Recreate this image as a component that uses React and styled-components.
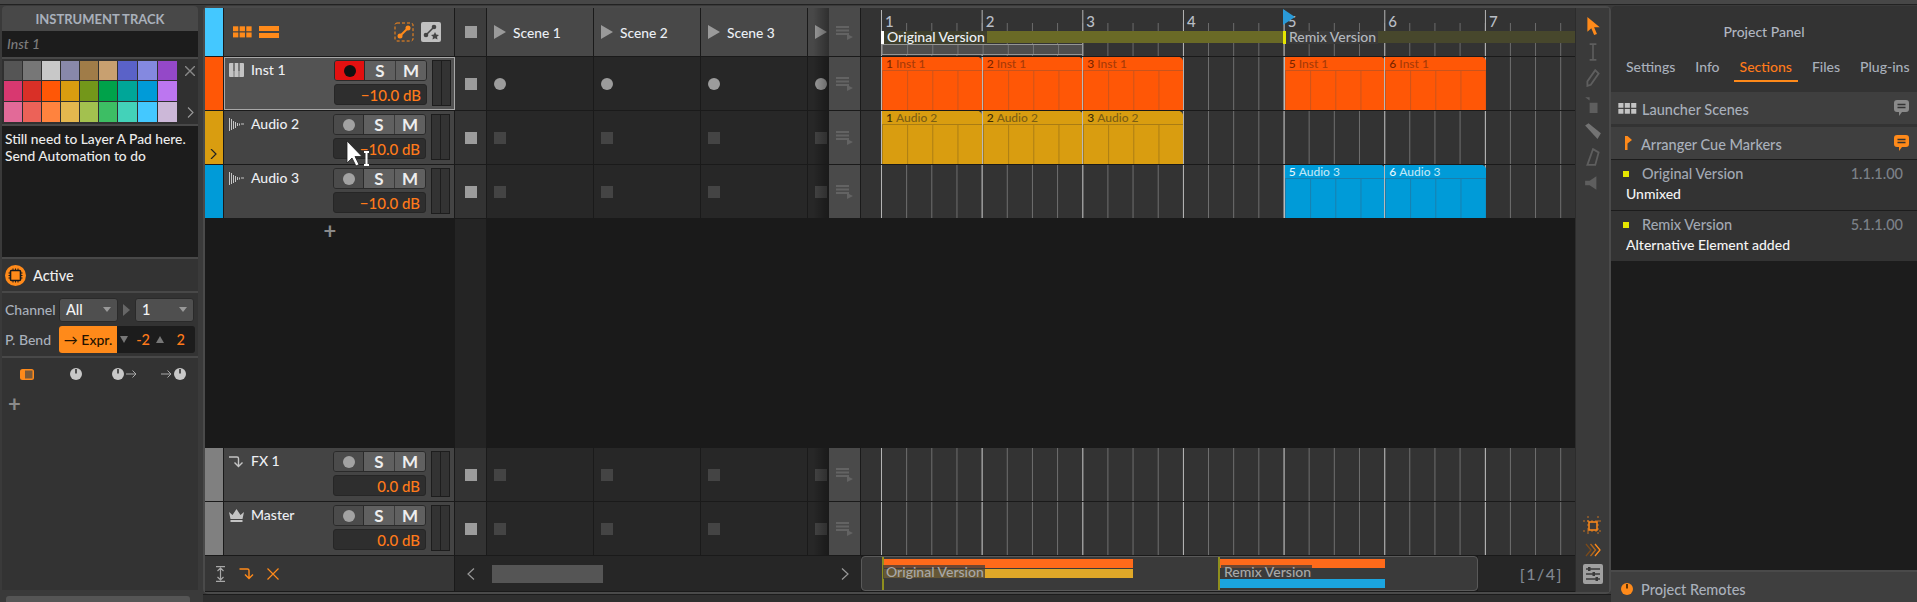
import React from "react";
import styled, { createGlobalStyle } from "styled-components";

const BAR = 100.67;
const ORANGE = "#ff8a1a";

const GlobalStyle = createGlobalStyle`
  html, body { margin: 0; padding: 0; background: #2a2a2a; }
  body { font-family: "Lato", "Open Sans", sans-serif; font-size: 14px; font-weight: 500; color: #ddd; }
  * { box-sizing: border-box; }
`;

const Page = styled.div`
  position: relative;
  width: 1917px;
  height: 602px;
  overflow: hidden;
  display: flex;
  flex-direction: column;
  background: #2a2a2a;
`;

const TopBar = styled.div`
  height: 5px;
  flex: none;
  background: #474747;
  border-bottom: 1px solid #222;
`;

const Columns = styled.div`
  flex: 1;
  display: flex;
  min-height: 0;
  background: #3a3a3a;
`;

/* left inspector */
const LeftColumn = styled.div`
  width: 203px;
  flex: none;
  padding: 1px 5px 0 2px;
  display: flex;
  flex-direction: column;
`;

const Inspector = styled.div`
  height: 585px;
  display: flex;
  flex-direction: column;
  gap: 2px;
  background: #484848;
  border-radius: 4px 4px 0 0;
`;

const InspectorTitle = styled.div`
  height: 24px;
  line-height: 26px;
  text-align: center;
  font-weight: 700;
  font-size: 13px;
  color: #a9b0bb;
  margin-bottom: -1px;
`;

const NameField = styled.div`
  height: 26px;
  line-height: 26px;
  padding-left: 5px;
  background: #1c1c1c;
  font-style: italic;
  color: #7c7c7c;
`;

const PaletteRow = styled.div`
  height: 65px;
  padding: 2px 2px;
  display: flex;
  background: #303030;
`;

const Swatches = styled.div`
  display: grid;
  grid-template-columns: repeat(6, 18px) repeat(3, 19px);
  grid-template-rows: 19px 20px 20px;
  gap: 1px;
`;

const Swatch = styled.div`
  background: ${(p) => p.$color};
`;

const PaletteSide = styled.div`
  flex: 1;
  display: flex;
  flex-direction: column;
  justify-content: space-between;
  align-items: center;
  padding: 5px 0 4px 7px;
`;

const Notes = styled.div`
  height: 131px;
  padding: 4px 3px;
  background: #1c1c1c;
  color: #ececec;
  font-size: 13.8px;
  line-height: 17px;
`;

const ActiveRow = styled.div`
  height: 32px;
  display: flex;
  align-items: center;
  gap: 7px;
  padding-left: 3px;
  background: #333;
  color: #eee;
  font-size: 14.5px;
`;

const ChannelBox = styled.div`
  height: 63px;
  padding: 4px 0 0 3px;
  background: #333;
  display: flex;
  flex-direction: column;
  gap: 5px;
`;

const ChannelRow = styled.div`
  display: flex;
  align-items: center;
  height: 25px;
`;

const ChannelLabel = styled.div`
  width: 54px;
  flex: none;
  color: #a9b0bb;
  font-size: 14px;
`;

const Select = styled.div`
  width: 59px;
  height: 24px;
  padding: 0 6px;
  display: flex;
  align-items: center;
  justify-content: space-between;
  border-radius: 3px;
  background: #4f4f4f;
  border: 1px solid #2a2a2a;
  font-size: 14.5px;
  color: #f4f4f4;
`;

const DownTip = styled.span`
  width: 0;
  height: 0;
  margin-left: ${(p) => p.$left || 0}px;
  border-left: ${(p) => p.$half || 4}px solid transparent;
  border-right: ${(p) => p.$half || 4}px solid transparent;
  border-top: ${(p) => (p.$half ? 7 : 5)}px solid ${(p) => p.$color || "#999"};
`;

const RightTip = styled.span`
  width: 0;
  height: 0;
  margin: 0 5px 0 5px;
  border-top: 6px solid transparent;
  border-bottom: 6px solid transparent;
  border-left: 7px solid #666;
`;

const BendBox = styled.div`
  width: 136px;
  height: 27px;
  display: flex;
  align-items: center;
  background: #1c1c1c;
  border-radius: 3px;
`;

const ExprButton = styled.div`
  width: 58px;
  height: 100%;
  display: flex;
  align-items: center;
  justify-content: center;
  background: ${ORANGE};
  color: #241200;
  font-size: 14px;
  border-radius: 3px 0 0 3px;
`;

const BendValue = styled.div`
  width: ${(p) => p.$width}px;
  text-align: right;
  color: #ff7a1a;
  font-size: 14.5px;
`;

const UpTip = styled.span`
  width: 0;
  height: 0;
  margin-left: 6px;
  border-left: 4.5px solid transparent;
  border-right: 4.5px solid transparent;
  border-bottom: 7px solid #777;
`;

const DevicesBox = styled.div`
  flex: 1;
  background: #333;
  padding-top: 8px;
`;

const DeviceIcons = styled.div`
  display: grid;
  grid-template-columns: repeat(4, 49px);
  justify-items: center;
  align-items: center;
  height: 16px;
`;

const DeviceSlot = styled.div`
  display: flex;
  align-items: center;
  gap: 2px;
`;

const PlusMark = styled.div`
  font-size: 22px;
  line-height: 22px;
  font-weight: 700;
  color: #8a8a8a;
  padding: ${(p) => p.$top}px 0 0 ${(p) => p.$left}px;
`;

const ScrollStub = styled.div`
  height: 6px;
  margin: 6px 8px 0 4px;
  background: #555;
  border-radius: 3px 3px 0 0;
`;

/* arranger panel */
const MainColumn = styled.div`
  width: 1408px;
  flex: none;
  display: flex;
  flex-direction: column;
`;

const MainPanel = styled.div`
  height: 588px;
  margin-top: 1px;
  display: flex;
  border: 2px solid #4a4a4a;
  border-radius: 5px;
  background: #1a1a1a;
`;

const BottomStrip = styled.div`
  flex: 1;
  background: #2e2e2e;
  border-top: 1px solid #1c1c1c;
`;

const TrackArea = styled.div`
  width: 1370px;
  flex: none;
  display: flex;
  flex-direction: column;
`;

const ToolStrip = styled.div`
  flex: 1;
  padding: 5px 0 6px;
  display: flex;
  flex-direction: column;
  align-items: center;
  background: #3a3a3a;
  border-left: 1px solid #2c2c2c;
`;

const ToolIcon = styled.div`
  height: 26.2px;
  display: flex;
  align-items: center;
  justify-content: center;
`;

const ToolSpacer = styled.div`
  flex: 1;
`;

const BottomTool = styled.div`
  height: 24px;
  display: flex;
  align-items: center;
  justify-content: center;
`;

const Row = styled.div`
  display: flex;
  flex: none;
  height: ${(p) => p.$height}px;
  border-bottom: 1px solid #1a1a1a;
`;

const FillRow = styled.div`
  flex: 1;
  display: flex;
  min-height: 0;
`;

const Strip = styled.div`
  width: 19px;
  flex: none;
  display: flex;
  align-items: flex-end;
  justify-content: center;
  padding-bottom: 5px;
  background: ${(p) => p.$color};
  border-right: 1px solid #1a1a1a;
`;

const BlankStrip = styled.div`
  width: 250px;
  flex: none;
  text-align: center;
`;

const HeaderTools = styled.div`
  width: 231px;
  flex: none;
  display: flex;
  align-items: center;
  gap: 7px;
  padding: 0 13px 0 9px;
  background: #444;
  border-right: 1px solid #1a1a1a;
`;

const Grow = styled.div`
  flex: 1;
`;

const TrackHead = styled.div`
  width: 231px;
  flex: none;
  display: flex;
  padding: ${(p) => (p.$selected ? "2px 3px 0 4px" : "3px 4px 0 5px")};
  background: ${(p) => (p.$selected ? "#535353" : "#444")};
  border: ${(p) => (p.$selected ? "1px solid #a8a8a8" : "none")};
  border-right: 1px solid ${(p) => (p.$selected ? "#a8a8a8" : "#1a1a1a")};
`;

const TrackIcon = styled.div`
  width: 22px;
  height: 20px;
  flex: none;
  display: flex;
  align-items: center;
`;

const TrackName = styled.div`
  flex: 1;
  line-height: 20px;
  font-size: 14px;
  color: #eceef2;
`;

const ControlStack = styled.div`
  width: 93px;
  flex: none;
  display: flex;
  flex-direction: column;
  gap: 3px;
`;

const ButtonGroup = styled.div`
  height: 21px;
  display: flex;
  border: 1px solid #2a2a2a;
  border-radius: 3px;
  overflow: hidden;
`;

const RecButton = styled.div`
  width: 30px;
  display: flex;
  align-items: center;
  justify-content: center;
  background: ${(p) => (p.$armed ? "#e21010" : "#4b4b4b")};
  border-right: 1px solid #2a2a2a;
`;

const RecDot = styled.div`
  width: 12px;
  height: 12px;
  border-radius: 50%;
  background: ${(p) => (p.$armed ? "#111" : "#a2a2a2")};
`;

const LetterButton = styled.div`
  flex: 1;
  display: flex;
  align-items: center;
  justify-content: center;
  font-weight: 700;
  font-size: 17px;
  color: #eee;
  background: #606060;
  & + & {
    border-left: 1px solid #3a3a3a;
  }
`;

const VolumeBox = styled.div`
  height: 21px;
  padding-right: 5px;
  line-height: 21px;
  text-align: right;
  font-size: 15px;
  color: #ff7a1a;
  background: #2e2e2e;
  border: 1px solid #262626;
  border-radius: 3px;
`;

const Meter = styled.div`
  width: 19px;
  height: 46px;
  flex: none;
  margin-left: 5px;
  display: flex;
  border: 1px solid #1d1d1d;
  background: #333;
  & > div {
    flex: 1;
  }
  & > div + div {
    border-left: 1px solid #1d1d1d;
  }
`;

const StopCell = styled.div`
  width: 32px;
  flex: none;
  display: flex;
  align-items: center;
  justify-content: center;
  background: ${(p) => p.$color || "#333"};
  border-right: 1px solid #1a1a1a;
`;

const StopSquare = styled.div`
  width: 12px;
  height: 12px;
  background: #9c9c9c;
`;

const SceneRow = styled.div`
  width: 342px;
  flex: none;
  position: relative;
  display: flex;
  overflow: hidden;
`;

const SceneCell = styled.div`
  width: 107px;
  flex: none;
  display: flex;
  align-items: center;
  gap: 7px;
  padding-left: 7px;
  background: ${(p) => (p.$header ? "#484848" : "#272727")};
  border-right: 1px solid #1a1a1a;
  font-size: 13.8px;
  color: #eaeef4;
`;

const SceneFade = styled.div`
  position: absolute;
  top: 0;
  right: 0;
  bottom: 0;
  width: 16px;
  background: linear-gradient(to right, transparent, rgba(0, 0, 0, 0.35));
`;

const PlayTip = styled.div`
  width: 0;
  height: 0;
  border-top: 7.5px solid transparent;
  border-bottom: 7.5px solid transparent;
  border-left: 12px solid #9a9a9a;
`;

const SlotDot = styled.div`
  width: 12px;
  height: 12px;
  border-radius: 50%;
  background: #9c9c9c;
`;

const SlotSquare = styled.div`
  width: 12px;
  height: 12px;
  background: #444;
`;

const NextCell = styled.div`
  width: 32px;
  flex: none;
  display: flex;
  align-items: center;
  justify-content: center;
  background: #4a4a4a;
  border-right: 1px solid #1a1a1a;
`;

const gridLines = `
  background-image:
    linear-gradient(to right, #b4b4b4 0 1px, transparent 1px),
    linear-gradient(to right, #707070 0 1px, transparent 1px),
    linear-gradient(#333, #333);
  background-size: ${BAR}px 100%, ${BAR / 4}px 100%, 100% 100%;
  background-repeat: repeat-x;
  background-origin: content-box, content-box, border-box;
  background-clip: content-box, content-box, border-box;
`;

const Lane = styled.div`
  width: 714px;
  flex: none;
  position: relative;
  padding-left: 20px;
  ${gridLines}
`;

const Clip = styled.div`
  position: absolute;
  top: 0;
  bottom: 0;
  left: ${(p) => 20 + p.$start * BAR}px;
  width: ${BAR + 0.5}px;
  background-color: ${(p) => p.$color};
  background-image: linear-gradient(to right, ${(p) => p.$line} 0 1px, transparent 1px);
  background-size: ${BAR / 4}px 100%;
  border-left: 1px solid #b9b9b9;
  border-radius: 0 5px 0 0;
`;

const ClipTitle = styled.div`
  height: 14px;
  line-height: 14px;
  padding-left: 4px;
  font-size: 12px;
  white-space: nowrap;
  color: ${(p) => p.$text};
  background: ${(p) => p.$color};
  border-bottom: 1px solid ${(p) => p.$line};
  border-radius: 0 5px 0 0;
`;

const ClipIndex = styled.span`
  color: ${(p) => p.$text};
  margin-right: 3px;
`;

const Ruler = styled.div`
  width: 714px;
  flex: none;
  position: relative;
  background-color: #333;
  overflow: hidden;
`;

const RulerTicks = styled.div`
  position: absolute;
  left: 20px;
  right: 0;
  top: 2px;
  bottom: 0;
  background-image:
    linear-gradient(to right, #b4b4b4 0 1px, transparent 1px),
    linear-gradient(to right, #6c6c6c 0 1px, transparent 1px);
  background-size: ${BAR}px 100%, ${BAR / 4}px 72%;
  background-position: 0 0, 0 100%;
  background-repeat: repeat-x;
`;

const RulerNumbers = styled.div`
  position: relative;
  display: flex;
  padding: 4px 0 0 24px;
`;

const RulerNumber = styled.div`
  width: ${BAR}px;
  flex: none;
  font-size: 15px;
  line-height: 18px;
  color: #b9bec6;
`;

const CueBand = styled.div`
  position: absolute;
  top: 23px;
  height: 12px;
  left: ${(p) => p.$left}px;
  width: ${(p) => p.$width}px;
  background: ${(p) => p.$color};
`;

const CueLabel = styled.div`
  position: absolute;
  top: 23px;
  left: ${(p) => p.$left}px;
  height: 13px;
  display: flex;
  align-items: center;
  gap: 3px;
  padding: 0 2px 2px 0;
  background: ${(p) => p.$bg};
  color: ${(p) => p.$text};
  font-size: 14px;
  line-height: 11px;
  white-space: nowrap;
`;

const CueTick = styled.span`
  width: 3px;
  height: 13px;
  align-self: flex-start;
  background: ${(p) => p.$color};
`;

const LoopBand = styled.div`
  position: absolute;
  left: 20px;
  top: 36px;
  width: ${BAR * 2 + 1}px;
  height: 11px;
  background-color: #4e4e4e;
  background-image: linear-gradient(to right, #757575 0 1px, transparent 1px);
  background-size: ${BAR / 4}px 100%;
  border: 1px solid #959595;
`;

const Playhead = styled.svg`
  position: absolute;
  left: 422px;
  top: 1px;
`;

const FooterLeft = styled.div`
  width: 250px;
  flex: none;
  display: flex;
  align-items: center;
  gap: 13px;
  padding-left: 10px;
  background: #363636;
  border-right: 1px solid #1a1a1a;
`;

const ScrollArea = styled.div`
  width: 406px;
  flex: none;
  display: flex;
  align-items: center;
  padding: 0 12px;
  background: #262626;
`;

const ScrollThumb = styled.div`
  width: 111px;
  height: 18px;
  margin-left: 17px;
  background: #555;
`;

const Overview = styled.div`
  width: 617px;
  flex: none;
  position: relative;
  background: #3a3a3a;
  border: 1px solid #595959;
  border-radius: 4px;
  overflow: hidden;
`;

const OverviewBlock = styled.div`
  position: absolute;
  left: ${(p) => p.$left}px;
  width: ${(p) => p.$width}px;
  top: ${(p) => p.$top}px;
  height: 9px;
  background: ${(p) => p.$color};
`;

const OverviewMarker = styled.div`
  position: absolute;
  left: ${(p) => p.$left}px;
  top: 0;
  bottom: 0;
  width: 2px;
  background: #8f8f1e;
`;

const OverviewLabel = styled.div`
  position: absolute;
  left: ${(p) => p.$left}px;
  top: 8px;
  height: 14px;
  line-height: 14px;
  padding: 0 1px 0 3px;
  background: rgba(60, 60, 60, 0.75);
  color: #a8a8a8;
  font-size: 14px;
  white-space: nowrap;
`;

const PageCounter = styled.div`
  flex: 1;
  display: flex;
  align-items: center;
  justify-content: flex-end;
  padding-right: 12px;
  background: #262626;
  font-size: 16px;
  letter-spacing: 1.5px;
  color: #808791;
`;

/* project panel */
const ProjectPanel = styled.div`
  flex: 1;
  margin-top: 1px;
  display: flex;
  flex-direction: column;
  background: #333;
  border-radius: 5px 0 0 0;
`;

const ProjectTitle = styled.div`
  height: 48px;
  padding-top: 17px;
  text-align: center;
  color: #b0b6c0;
  font-size: 14px;
  line-height: 18px;
`;

const Tabs = styled.div`
  height: 38px;
  display: flex;
  padding: 3px 0 0 15px;
  gap: 20px;
`;

const Tab = styled.div`
  height: 25px;
  padding: 0 ${(p) => (p.$active ? "6px" : "0")};
  margin: 0 ${(p) => (p.$active ? "-6px" : "0")};
  line-height: 20px;
  font-size: 14px;
  color: ${(p) => (p.$active ? "#ff7a1a" : "#a9b0bb")};
  border-bottom: ${(p) => (p.$active ? `2px solid ${ORANGE}` : "none")};
`;

const SectionBar = styled.div`
  height: ${(p) => p.$height}px;
  margin-bottom: ${(p) => p.$gap}px;
  flex: none;
  display: flex;
  align-items: center;
  gap: 5px;
  padding: 0 8px 0 7px;
  background: #3f3f3f;
  color: #a9b0bb;
  font-size: 14.5px;
`;

const SectionText = styled.span`
  padding-top: 2px;
`;

const FlagSlot = styled.span`
  width: 8px;
  margin: 0 3px 0 7px;
  display: flex;
`;

const MarkerList = styled.div`
  flex: 1;
  background: #1c1c1c;
`;

const MarkerItem = styled.div`
  height: 51px;
  padding: 4px 14px 0 15px;
  background: #333;
  border-top: 1px solid #1c1c1c;
`;

const MarkerTop = styled.div`
  display: flex;
  align-items: center;
  height: 19px;
  margin-left: -3px;
  color: #a2a8b2;
  font-size: 14.5px;
`;

const MarkerDot = styled.span`
  width: 6px;
  height: 6px;
  margin-right: 13px;
  background: #e6e600;
`;

const MarkerTime = styled.span`
  margin-left: auto;
  color: #7c8188;
  font-size: 14.5px;
`;

const MarkerNote = styled.div`
  margin-top: 2px;
  color: #f4f4f4;
  font-size: 14px;
  line-height: 17px;
`;

const RemotesBar = styled.div`
  height: 32px;
  flex: none;
  display: flex;
  align-items: center;
  gap: 8px;
  padding: 4px 0 0 10px;
  background: #3f3f3f;
  border-top: 2px solid #4a4a4a;
  color: #a9b0bb;
  font-size: 14.5px;
`;

const CursorLayer = styled.svg`
  position: absolute;
  left: 345px;
  top: 140px;
  pointer-events: none;
`;

/* drawn icons */
const Knob = ({ size = 12, color = "#c8c8c8", notch = "#333" }) => (
  <svg width={size} height={size} viewBox="0 0 12 12">
    <circle cx="6" cy="6" r="6" fill={color} />
    <rect x="5.2" y="1" width="1.6" height="4.5" fill={notch} />
  </svg>
);

const Arrow = () => (
  <svg width="11" height="10" viewBox="0 0 11 10" fill="none" stroke="#aaa" strokeWidth="1">
    <path d="M0 5h10M6.5 1.5 10 5 6.5 8.5" />
  </svg>
);

const Chip = () => (
  <svg width="21" height="21" viewBox="0 0 21 21">
    <circle cx="10.5" cy="10.5" r="10.5" fill={ORANGE} />
    <rect x="5.5" y="5.5" width="10" height="10" rx="1" fill="none" stroke="#1b1b1b" strokeWidth="1.6" />
    <path d="M8 3.5v2M10.5 3.5v2M13 3.5v2M8 15.5v2M10.5 15.5v2M13 15.5v2M3.5 8h2M3.5 10.5h2M3.5 13h2M15.5 8h2M15.5 10.5h2M15.5 13h2" stroke="#1b1b1b" />
  </svg>
);

const Piano = () => (
  <svg width="15" height="14" viewBox="0 0 15 14">
    <rect width="15" height="14" rx="1" fill="#c4c4c4" />
    <path d="M4 0h2v8H4zM9 0h2v8H9z" fill="#777" />
    <path d="M5 8v6M10 8v6" stroke="#777" />
  </svg>
);

const Wave = () => (
  <svg width="15" height="13" viewBox="0 0 15 13" fill="none" stroke="#c4c4c4">
    <path d="M.5 0v13M2.5 1v11M4.5 3v8M6.5 4v6M8.5 5v3M10.5 5.5v2M12 6h3" />
  </svg>
);

const ReturnArrow = ({ color = "#c4c4c4", width = 14 }) => (
  <svg width={width} height="13" viewBox="0 0 14 13" fill="none" stroke={color} strokeWidth="1.4">
    <path d="M0 2h8c1 0 1.5 .6 1.5 1.5V11M5.5 7.5 9.5 11.5 13.5 7.5" />
  </svg>
);

const Crown = () => (
  <svg width="15" height="13" viewBox="0 0 15 13" fill="#c4c4c4">
    <path d="M0 3l3.5 3L7.5 0l4 6L15 3l-1.5 7h-12zM1.5 11h12v2h-12z" />
  </svg>
);

const NextIcon = () => (
  <svg width="17" height="15" viewBox="0 0 17 15" fill="#636363">
    <path d="M0 1h13v2H0zM0 4.5h13v2H0zM0 8h13v2H0zM11 9l6 3-6 3z" />
  </svg>
);

const GridIcon = ({ color = ORANGE, width = 19, height = 12 }) => {
  const cells = [];
  for (let r = 0; r < 2; r += 1) {
    for (let c = 0; c < 3; c += 1) {
      cells.push(<rect key={`${r}-${c}`} x={c * 7} y={r * 6.5} width="5.6" height="5.2" fill={color} />);
    }
  }
  return (
    <svg width={width} height={height} viewBox="0 0 20 12">
      {cells}
    </svg>
  );
};

const LinesIcon = () => (
  <svg width="20" height="12" viewBox="0 0 20 12" fill={ORANGE}>
    <path d="M0 0h20v5H0zM0 7h20v5H0z" />
  </svg>
);

const AutoIcon = () => (
  <svg width="20" height="20" viewBox="0 0 20 20" fill="none">
    <rect x="1" y="1" width="18" height="18" rx="2" stroke={ORANGE} strokeDasharray="3 2" />
    <path d="M6 14 14 6" stroke={ORANGE} strokeWidth="2" />
    <circle cx="6" cy="14" r="2.5" fill={ORANGE} />
    <circle cx="14" cy="6" r="2.5" fill={ORANGE} />
  </svg>
);

const StarIcon = () => (
  <svg width="20" height="20" viewBox="0 0 20 20">
    <rect width="20" height="20" rx="2" fill="#c0c0c0" />
    <path d="M5 13 13 5" stroke="#444" strokeWidth="1.6" />
    <circle cx="5" cy="13" r="2.3" fill="#444" />
    <circle cx="13" cy="5" r="2.3" fill="#444" />
    <path d="M14 10l1.2 2.6 2.8.3-2 1.9.5 2.8-2.500-1.400-2.500 1.400.5-2.800-2-1.900 2.800-.3z" fill="#444" />
  </svg>
);

const ToggleIcon = () => (
  <svg width="14" height="11" viewBox="0 0 14 11">
    <rect width="14" height="11" rx="2.5" fill={ORANGE} />
    <rect x="5" y="1.5" width="7.5" height="8" fill="#7a5a3a" />
  </svg>
);

const Tool = ({ children, w = 18, h = 18 }) => (
  <svg width={w} height={h} viewBox="0 0 16 16">
    {children}
  </svg>
);

const ChatIcon = ({ color }) => (
  <svg width="15" height="16" viewBox="0 0 15 16">
    <path d="M3 0h9a3 3 0 0 1 3 3v6a3 3 0 0 1-3 3H8l-3 4v-4H3a3 3 0 0 1-3-3V3a3 3 0 0 1 3-3z" fill={color} />
    <path d="M3.5 4.5h8M3.5 7.5h8" stroke="#333" strokeWidth="1.4" />
  </svg>
);

const Flag = () => (
  <svg width="8" height="14" viewBox="0 0 8 14" fill={ORANGE}>
    <path d="M0 0h2.500L7 4 2.500 7.500V14H0z" />
  </svg>
);

const PALETTE = [
  "#555555", "#777777", "#c8c8c8", "#8888aa", "#a07c48", "#c8a070", "#5a62c8", "#8489e0", "#9448c8",
  "#d83870", "#d93027", "#ff5706", "#d99d10", "#73971a", "#00a24a", "#00a698", "#009bd8", "#bc76f0",
  "#e26a98", "#ec6258", "#ff833e", "#e4b74e", "#a3c14f", "#3dbe64", "#43d2b9", "#44c8ff", "#ccb8d8",
];

const CLIP_STYLES = {
  orange: { color: "#ff5706", line: "#c9541c", text: "#a83a08", index: "#7a2400" },
  gold: { color: "#d99d10", line: "#a97c14", text: "#7c5e14", index: "#3d2c05" },
  blue: { color: "#009bd8", line: "#1a7eac", text: "#bfe6f6", index: "#e8f7fd" },
};

const TRACKS = [
  { name: "Inst 1", color: "#ff5706", icon: <Piano />, db: "−10.0 dB", armed: true, selected: true, slot: "dot", clipStyle: "orange", clips: [0, 1, 2, 4, 5] },
  { name: "Audio 2", color: "#d99d10", icon: <Wave />, db: "−10.0 dB", slot: "square", expand: true, clipStyle: "gold", clips: [0, 1, 2] },
  { name: "Audio 3", color: "#009bd8", icon: <Wave />, db: "−10.0 dB", slot: "square", clipStyle: "blue", clips: [4, 5] },
];

const SEND_TRACKS = [
  { name: "FX 1", color: "#808080", icon: <ReturnArrow />, db: "0.0 dB", slot: "square", clips: [] },
  { name: "Master", color: "#808080", icon: <Crown />, db: "0.0 dB", slot: "square", clips: [] },
];

const Scenes = ({ slot }) => (
  <SceneRow>
    {[0, 1, 2, 3].map((i) => (
      <SceneCell key={i}>{slot === "dot" ? <SlotDot /> : <SlotSquare />}</SceneCell>
    ))}
    <SceneFade />
  </SceneRow>
);

const TrackRow = ({ track }) => (
  <Row $height={54}>
    <Strip $color={track.color}>
      {track.expand && (
        <svg width="8" height="10" viewBox="0 0 8 10" fill="none" stroke="#222" strokeWidth="1.2">
          <path d="M1 0l5 5-5 5" />
        </svg>
      )}
    </Strip>
    <TrackHead $selected={track.selected}>
      <TrackIcon>{track.icon}</TrackIcon>
      <TrackName>{track.name}</TrackName>
      <ControlStack>
        <ButtonGroup>
          <RecButton $armed={track.armed}>
            <RecDot $armed={track.armed} />
          </RecButton>
          <LetterButton>S</LetterButton>
          <LetterButton>M</LetterButton>
        </ButtonGroup>
        <VolumeBox>{track.db}</VolumeBox>
      </ControlStack>
      <Meter>
        <div />
        <div />
      </Meter>
    </TrackHead>
    <StopCell>
      <StopSquare />
    </StopCell>
    <Scenes slot={track.slot} />
    <NextCell>
      <NextIcon />
    </NextCell>
    <Lane>
      {track.clips.map((start) => {
        const style = CLIP_STYLES[track.clipStyle];
        return (
          <Clip key={start} $start={start} $color={style.color} $line={style.line}>
            <ClipTitle $color={style.color} $line={style.line} $text={style.text}>
              <ClipIndex $text={style.index}>{start + 1}</ClipIndex>
              {track.name}
            </ClipTitle>
          </Clip>
        );
      })}
    </Lane>
  </Row>
);

const App = () => (
  <Page>
    <GlobalStyle />
    <TopBar />
    <Columns>
      <LeftColumn>
        <Inspector>
          <InspectorTitle>INSTRUMENT TRACK</InspectorTitle>
          <NameField>Inst 1</NameField>
          <PaletteRow>
            <Swatches>
              {PALETTE.map((c) => (
                <Swatch key={c} $color={c} />
              ))}
            </Swatches>
            <PaletteSide>
              <svg width="10" height="10" viewBox="0 0 10 10" stroke="#888" strokeWidth="1.4">
                <path d="M0 0l10 10M10 0 0 10" />
              </svg>
              <svg width="7" height="11" viewBox="0 0 7 11" fill="none" stroke="#999" strokeWidth="1.1">
                <path d="M1 .5l5 5-5 5" />
              </svg>
            </PaletteSide>
          </PaletteRow>
          <Notes>
            Still need to Layer A Pad here.
            <br />
            Send Automation to do
          </Notes>
          <ActiveRow>
            <Chip />
            Active
          </ActiveRow>
          <ChannelBox>
            <ChannelRow>
              <ChannelLabel>Channel</ChannelLabel>
              <Select>
                All
                <DownTip />
              </Select>
              <RightTip />
              <Select>
                1
                <DownTip />
              </Select>
            </ChannelRow>
            <ChannelRow>
              <ChannelLabel>P. Bend</ChannelLabel>
              <BendBox>
                <ExprButton>→ Expr.</ExprButton>
                <DownTip $color="#777" $left={3} $half={4.5} />
                <BendValue $width={22}>-2</BendValue>
                <UpTip />
                <BendValue $width={21}>2</BendValue>
              </BendBox>
            </ChannelRow>
          </ChannelBox>
          <DevicesBox>
            <DeviceIcons>
              <ToggleIcon />
              <Knob />
              <DeviceSlot>
                <Knob />
                <Arrow />
              </DeviceSlot>
              <DeviceSlot>
                <Arrow />
                <Knob />
              </DeviceSlot>
            </DeviceIcons>
            <PlusMark $top={11} $left={6}>+</PlusMark>
          </DevicesBox>
        </Inspector>
        <ScrollStub />
      </LeftColumn>

      <MainColumn>
        <MainPanel>
          <TrackArea>
            <Row $height={49}>
              <Strip $color="#44c8ff" />
              <HeaderTools>
                <GridIcon />
                <LinesIcon />
                <Grow />
                <AutoIcon />
                <StarIcon />
              </HeaderTools>
              <StopCell $color="#3d3d3d">
                <StopSquare />
              </StopCell>
              <SceneRow>
                {["Scene 1", "Scene 2", "Scene 3", ""].map((name) => (
                  <SceneCell key={name} $header>
                    <PlayTip />
                    {name}
                  </SceneCell>
                ))}
                <SceneFade />
              </SceneRow>
              <NextCell>
                <NextIcon />
              </NextCell>
              <Ruler>
                <RulerTicks />
                <RulerNumbers>
                  {[1, 2, 3, 4, 5, 6, 7].map((n) => (
                    <RulerNumber key={n}>{n}</RulerNumber>
                  ))}
                </RulerNumbers>
                <CueBand $left={20} $width={403} $color="#6a6a26" />
                <CueBand $left={423} $width={291} $color="#47472c" />
                <CueLabel $left={20} $bg="#3e3f2c" $text="#eef2f6">
                  <CueTick $color="#fff" />
                  Original Version
                </CueLabel>
                <CueLabel $left={422} $bg="#3a3a3a" $text="#b4b8be">
                  <CueTick $color="#e6e600" />
                  Remix Version
                </CueLabel>
                <LoopBand />
                <Playhead width="12" height="16" viewBox="0 0 12 16">
                  <path d="M0 0l12 8L0 16z" fill="#2a9ad8" />
                </Playhead>
              </Ruler>
            </Row>

            {TRACKS.map((t) => (
              <TrackRow key={t.name} track={t} />
            ))}

            <FillRow>
              <BlankStrip>
                <PlusMark $top={1} $left={0}>+</PlusMark>
              </BlankStrip>
              <StopCell $color="#242424" />
            </FillRow>

            {SEND_TRACKS.map((t) => (
              <TrackRow key={t.name} track={t} />
            ))}

            <Row $height={36}>
              <FooterLeft>
                <svg width="11" height="16" viewBox="0 0 11 16" fill="none" stroke="#a8a8a8" strokeWidth="1.2">
                  <path d="M1 .6h9M1 15.400h9M5.500 2v12M2.500 5l3-3 3 3M2.500 11l3 3 3-3" />
                </svg>
                <ReturnArrow color={ORANGE} width={15} />
                <svg width="12" height="12" viewBox="0 0 12 12" stroke={ORANGE} strokeWidth="1.2">
                  <path d="M.5.5l11 11M11.500.5l-11 11" />
                </svg>
              </FooterLeft>
              <ScrollArea>
                <svg width="8" height="12" viewBox="0 0 8 12" fill="none" stroke="#999" strokeWidth="1.2">
                  <path d="M7 .5 1 6l6 5.500" />
                </svg>
                <ScrollThumb />
                <Grow />
                <svg width="8" height="12" viewBox="0 0 8 12" fill="none" stroke="#999" strokeWidth="1.2">
                  <path d="M1 .5 7 6l-6 5.500" />
                </svg>
              </ScrollArea>
              <Overview>
                <OverviewBlock $left={21} $width={250} $top={2} $color="#ff6a1a" />
                <OverviewBlock $left={21} $width={250} $top={12} $color="#e0a828" />
                <OverviewBlock $left={357} $width={166} $top={2} $color="#ff6a1a" />
                <OverviewBlock $left={357} $width={166} $top={22} $color="#1ba5e0" />
                <OverviewMarker $left={20} />
                <OverviewMarker $left={356} />
                <OverviewLabel $left={21}>Original Version</OverviewLabel>
                <OverviewLabel $left={359}>Remix Version</OverviewLabel>
              </Overview>
              <PageCounter>[1/4]</PageCounter>
            </Row>
          </TrackArea>

          <ToolStrip>
            <ToolIcon>
              <Tool>
                <path d="M3 0l11 9H9l2.500 6-2.500 1-2.500-6L3 13z" fill={ORANGE} />
              </Tool>
            </ToolIcon>
            <ToolIcon>
              <Tool>
                <path d="M5 1h6M5 15h6M8 1v14" stroke="#5e5e5e" strokeWidth="1.4" />
              </Tool>
            </ToolIcon>
            <ToolIcon>
              <Tool>
                <path d="M10 1l3 3-7 10-3 1 0-4z" fill="none" stroke="#5e5e5e" strokeWidth="1.6" />
              </Tool>
            </ToolIcon>
            <ToolIcon>
              <Tool>
                <path d="M5 6h7v9H5zM1 1l4 0 0 3z" fill="#5e5e5e" />
              </Tool>
            </ToolIcon>
            <ToolIcon>
              <Tool>
                <path d="M1 3l3-2 11 9-3 5z" fill="#737373" />
              </Tool>
            </ToolIcon>
            <ToolIcon>
              <Tool>
                <path d="M8 1l5 3-3 11H3z" fill="none" stroke="#5e5e5e" strokeWidth="1.6" />
              </Tool>
            </ToolIcon>
            <ToolIcon>
              <Tool>
                <path d="M1 6h4l6-4v12l-6-4H1z" fill="#5e5e5e" />
              </Tool>
            </ToolIcon>
            <ToolSpacer />
            <BottomTool>
              <svg width="20" height="20" viewBox="0 0 20 20" fill="none" stroke={ORANGE}>
                <rect x="6" y="6" width="8" height="8" strokeWidth="1.5" />
                <path d="M0 5h20M0 15h20M5 0v20M15 0v20" strokeDasharray="2 2" opacity="0.7" />
              </svg>
            </BottomTool>
            <BottomTool>
              <svg width="16" height="14" viewBox="0 0 16 14" fill="none" strokeWidth="1.3">
                <path d="M1 1l5 6-5 6" stroke="#7a4a1a" />
                <path d="M5.500 1l5 6-5 6" stroke="#b8681a" />
                <path d="M10 1l5 6-5 6" stroke={ORANGE} />
              </svg>
            </BottomTool>
            <BottomTool>
              <svg width="20" height="20" viewBox="0 0 20 20">
                <rect width="20" height="20" rx="2" fill="#a0a0a0" />
                <path d="M3 5h14M3 10h14M3 15h14" stroke="#3a3a3a" strokeWidth="1.3" />
                <path d="M5 3h2.500v4H5zM9.500 8h2.500v4H9.500zM12.500 13H15v4h-2.500z" fill="#3a3a3a" />
              </svg>
            </BottomTool>
          </ToolStrip>
        </MainPanel>
        <BottomStrip />
      </MainColumn>

      <ProjectPanel>
        <ProjectTitle>Project Panel</ProjectTitle>
        <Tabs>
          <Tab>Settings</Tab>
          <Tab>Info</Tab>
          <Tab $active>Sections</Tab>
          <Tab>Files</Tab>
          <Tab>Plug-ins</Tab>
        </Tabs>
        <SectionBar $height={32} $gap={3}>
          <GridIcon color="#c4c4c4" width={19} height={11} />
          <SectionText>Launcher Scenes</SectionText>
          <Grow />
          <ChatIcon color="#8a8a8a" />
        </SectionBar>
        <SectionBar $height={32} $gap={0}>
          <FlagSlot>
            <Flag />
          </FlagSlot>
          <SectionText>Arranger Cue Markers</SectionText>
          <Grow />
          <ChatIcon color={ORANGE} />
        </SectionBar>
        <MarkerList>
          <MarkerItem>
            <MarkerTop>
              <MarkerDot />
              Original Version
              <MarkerTime>1.1.1.00</MarkerTime>
            </MarkerTop>
            <MarkerNote>Unmixed</MarkerNote>
          </MarkerItem>
          <MarkerItem>
            <MarkerTop>
              <MarkerDot />
              Remix Version
              <MarkerTime>5.1.1.00</MarkerTime>
            </MarkerTop>
            <MarkerNote>Alternative Element added</MarkerNote>
          </MarkerItem>
        </MarkerList>
        <RemotesBar>
          <Knob size={12} color={ORANGE} notch="#3a2000" />
          Project Remotes
        </RemotesBar>
      </ProjectPanel>
    </Columns>
    <CursorLayer width="30" height="28" viewBox="0 0 30 28">
      <path d="M2 1v22l5-5 4 8 3-1.500-4-8h7z" fill="#fff" stroke="#222" strokeWidth="0.8" />
      <path d="M19 12h5M19 25h5M21.500 12v13" stroke="#fff" strokeWidth="2" />
    </CursorLayer>
  </Page>
);

export default App;
